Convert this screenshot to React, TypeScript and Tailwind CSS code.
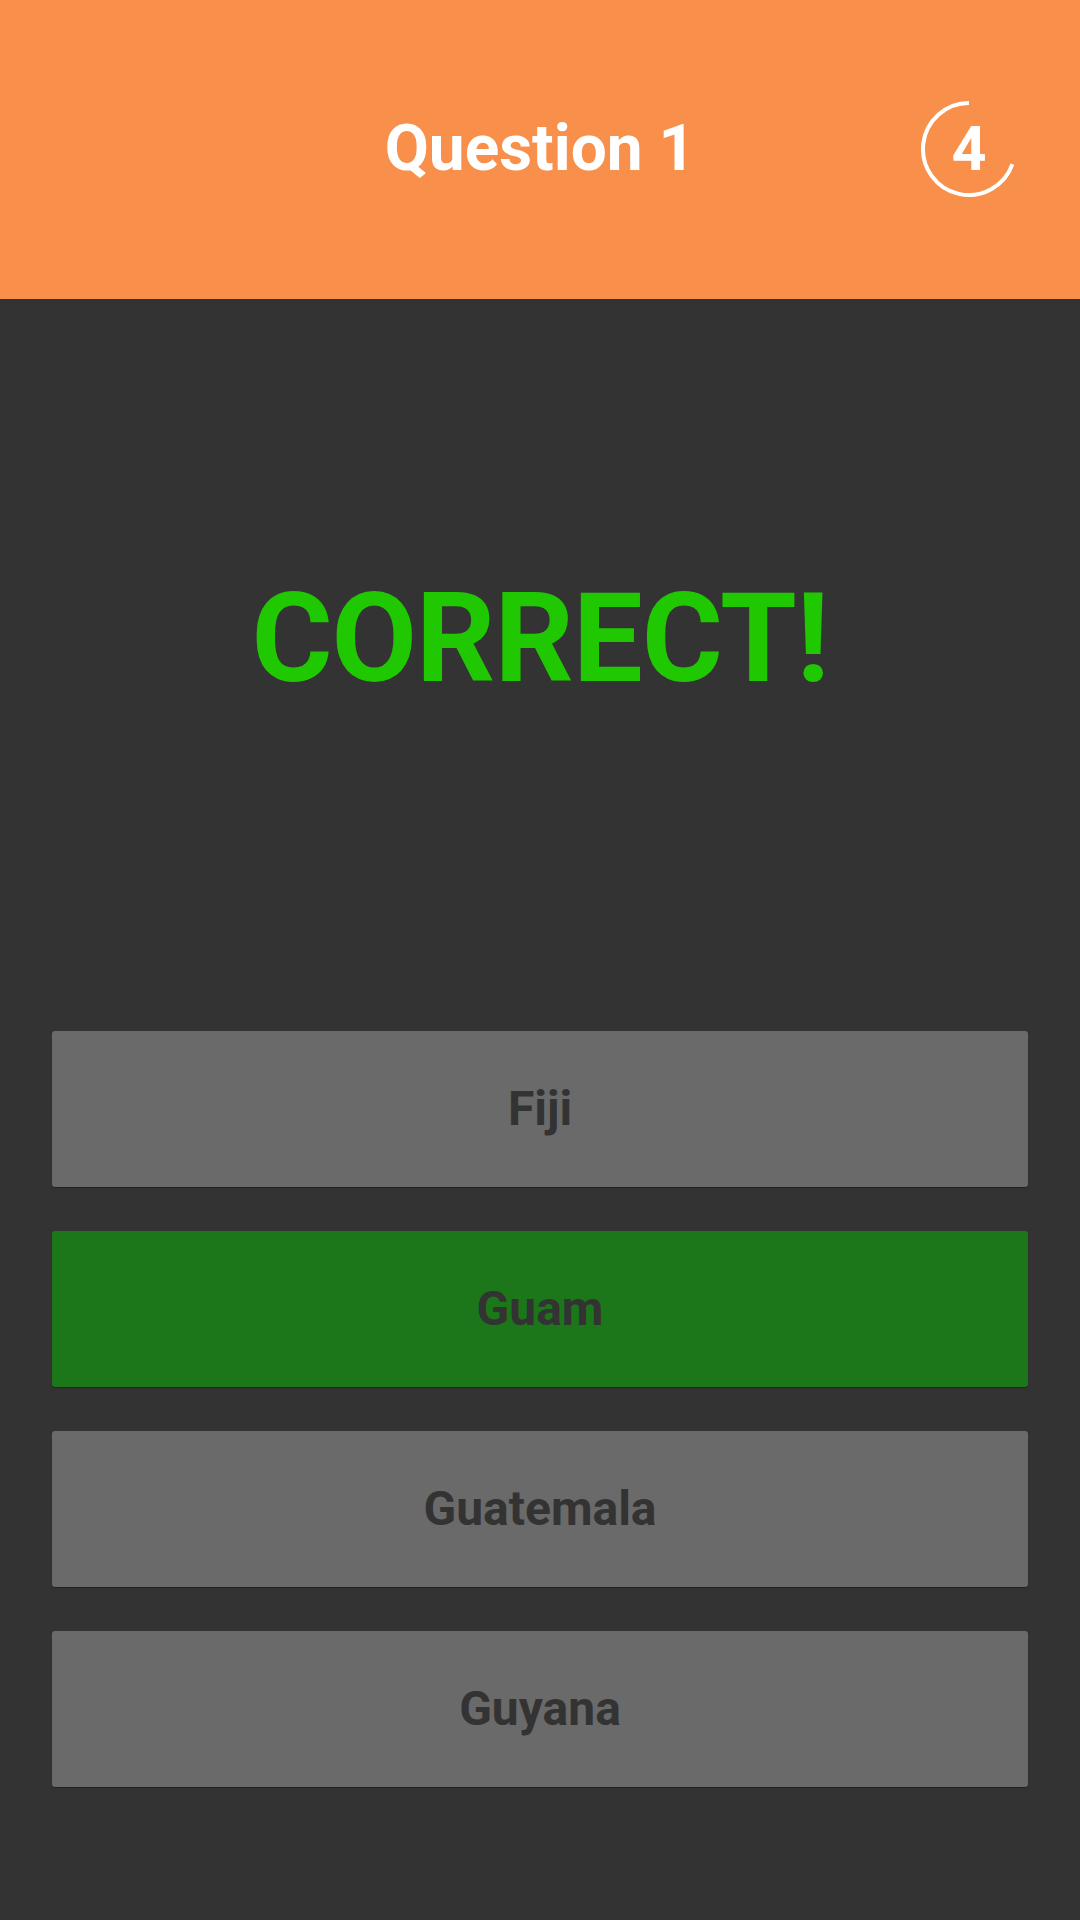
import React from "react";

const answers = [
  { label: "Fiji", correct: false },
  { label: "Guam", correct: true },
  { label: "Guatemala", correct: false },
  { label: "Guyana", correct: false },
];

function Timer({ value }: { value: number }) {
  return (
    <div className="absolute right-[62px] top-[100px] w-[98px] h-[98px] flex items-center justify-center">
      <svg
        className="absolute inset-0"
        width="98"
        height="98"
        viewBox="0 0 98 98"
        fill="none"
      >
        {/* arc from top, round the left side, ending lower right */}
        <path
          d="M49 3 A46 46 0 1 0 92.4 64.2"
          stroke="white"
          strokeWidth="4"
          strokeLinecap="butt"
        />
      </svg>
      <span className="relative text-[61px] font-bold text-white leading-none">
        {value}
      </span>
    </div>
  );
}

export default function App() {
  return (
    <div
      className="w-[1080px] h-[1920px] bg-[#333333] flex flex-col"
      style={{ fontFamily: "Roboto, 'Liberation Sans', sans-serif" }}
    >
      <header className="relative h-[299px] bg-[#f88f4a] flex items-start justify-center pt-[117px]">
        <h1 className="text-[64px] font-bold text-white leading-none">
          Question 1
        </h1>
        <Timer value={4} />
      </header>

      <main className="flex flex-col px-[52px]">
        <div className="h-[732px] flex items-start justify-center pt-[278px]">
          <p className="text-[124px] font-bold text-[#1fc800] leading-none tracking-[-1px]">
            CORRECT!
          </p>
        </div>

        <div className="flex flex-col gap-[44px]">
          {answers.map((a) => (
            <button
              key={a.label}
              type="button"
              className={
                a.correct
                  ? "h-[156px] w-[976px] rounded-[3px] bg-[#1b7719] flex items-center justify-center shadow-[0_1px_1px_rgba(0,0,0,0.35)]"
                  : "h-[156px] w-[976px] rounded-[3px] bg-[#6a6a6a] flex items-center justify-center shadow-[0_1px_1px_rgba(0,0,0,0.35)]"
              }
            >
              <span className="text-[48px] font-bold text-[#333333] leading-none">
                {a.label}
              </span>
            </button>
          ))}
        </div>
      </main>
    </div>
  );
}
